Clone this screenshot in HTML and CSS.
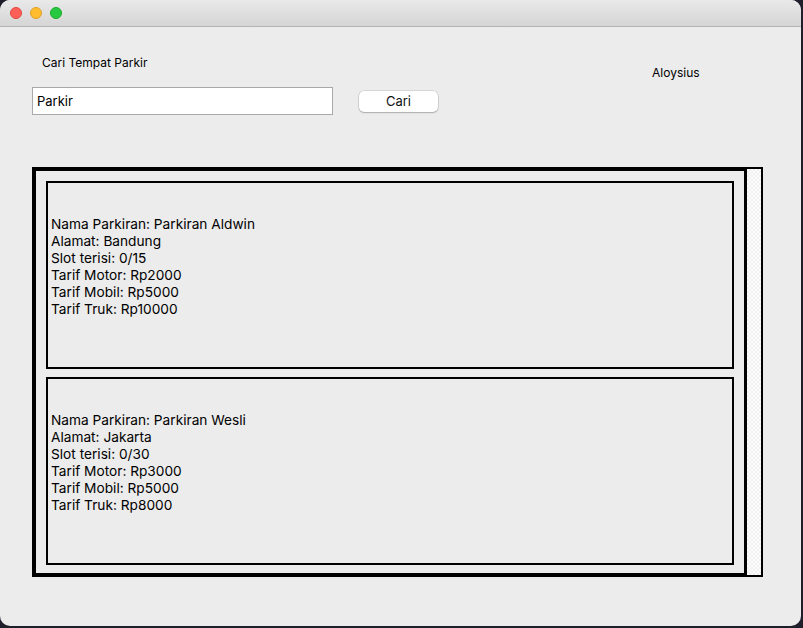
FILE: index.html
```html
<!DOCTYPE html>
<html>
<head>
<meta charset="utf-8">
<link rel="stylesheet" href="styles.css">
</head>
<body>
<div class="window">
  <div class="titlebar">
    <span class="light red"></span>
    <span class="light yellow"></span>
    <span class="light green"></span>
  </div>
  <div class="content">
    <div class="header">
      <div class="search">
        <div class="label">Cari Tempat Parkir</div>
        <div class="search-row">
          <input class="field" type="text" value="Parkir">
          <button class="btn">Cari</button>
        </div>
      </div>
      <div class="user">Aloysius</div>
    </div>
    <div class="scroll">
      <div class="pane">
        <div class="card">
          <div class="info">
            <div>Nama Parkiran: Parkiran Aldwin</div>
            <div>Alamat: Bandung</div>
            <div>Slot terisi: 0/15</div>
            <div>Tarif Motor: Rp2000</div>
            <div>Tarif Mobil: Rp5000</div>
            <div>Tarif Truk: Rp10000</div>
          </div>
        </div>
        <div class="card">
          <div class="info">
            <div>Nama Parkiran: Parkiran Wesli</div>
            <div>Alamat: Jakarta</div>
            <div>Slot terisi: 0/30</div>
            <div>Tarif Motor: Rp3000</div>
            <div>Tarif Mobil: Rp5000</div>
            <div>Tarif Truk: Rp8000</div>
          </div>
        </div>
      </div>
      <div class="scrollbar"></div>
    </div>
  </div>
</div>
</body>
</html>
```
FILE: styles.css
```css
html, body {
  margin: 0;
  padding: 0;
  background: #1f1f2b;
  width: 803px;
  height: 628px;
  overflow: hidden;
}
.window {
  width: 801px;
  height: 626px;
  background: #ececec;
  border-radius: 10px;
  overflow: hidden;
  font-family: Inter, "Liberation Sans", sans-serif;
  color: #000;
}
.titlebar {
  height: 26px;
  border-bottom: 1px solid #b4b4b4;
  background: linear-gradient(#e9e9e9, #d5d5d5);
  display: flex;
  align-items: center;
  gap: 8px;
  padding-left: 10px;
  box-sizing: content-box;
}
.light {
  width: 12px;
  height: 12px;
  border-radius: 50%;
  box-sizing: border-box;
}
.red { background: #fe5f57; border: 0.5px solid #e2463f; }
.yellow { background: #febc2e; border: 0.5px solid #dea123; }
.green { background: #28c840; border: 0.5px solid #1aab29; }
.content {
  padding-left: 32px;
}
.header {
  display: flex;
  height: 88px;
}
.search {
  padding-top: 28px;
}
.label {
  font-size: 12px;
  line-height: 16px;
  margin-left: 10px;
  height: 16px;
}
.search-row {
  margin-top: 16px;
  display: flex;
  align-items: center;
  gap: 26px;
}
.field {
  width: 301px;
  height: 28px;
  box-sizing: border-box;
  border: 1px solid #a9a9a9;
  background: #fff;
  margin: 0;
  padding: 0 4px;
  font-family: Inter, "Liberation Sans", sans-serif;
  font-size: 13px;
  color: #000;
  outline: none;
}
.btn {
  width: 79px;
  height: 21px;
  margin: 0;
  padding: 0;
  border: none;
  border-radius: 5px;
  background: #fff;
  box-shadow: 0 0 0 0.5px rgba(0,0,0,0.18), 0 1px 1.5px rgba(0,0,0,0.2);
  font-family: Inter, "Liberation Sans", sans-serif;
  font-size: 13px;
  color: #111;
}
.user {
  margin-left: 214px;
  margin-top: 38px;
  font-size: 12px;
  line-height: 16px;
  height: 16px;
}
.scroll {
  margin-top: 52px;
  display: flex;
  width: 731px;
  height: 410px;
}
.pane {
  width: 712px;
  height: 410px;
  box-sizing: border-box;
  border: 4px solid #000;
  border-right: none;
  padding: 10px 0 0 10px;
  display: flex;
  flex-direction: column;
  gap: 8px;
}
.card {
  width: 688px;
  height: 188px;
  box-sizing: border-box;
  border: 2px solid #000;
  padding: 33px 3px 0 3px;
}
.info {
  font-size: 13.7px;
  line-height: 17px;
}
.scrollbar {
  width: 19px;
  height: 410px;
  box-sizing: border-box;
  border: 2px solid #000;
  border-left-width: 3px;
  background-color: #fafafa;
  background-image: repeating-conic-gradient(#f1f1f1 0% 25%, #fcfcfc 0% 50%);
  background-size: 4px 4px;
}
```
